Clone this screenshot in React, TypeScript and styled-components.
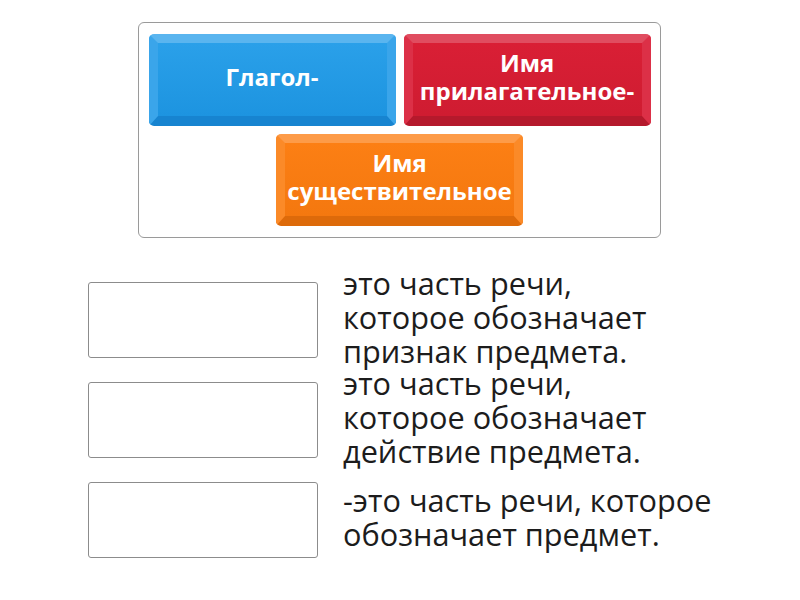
import React from "react";
import styled, { createGlobalStyle } from "styled-components";

const Global = createGlobalStyle`
  html, body { margin: 0; padding: 0; background: #ffffff; }
  body { font-family: "Open Sans", "Noto Sans", sans-serif; }
`;

const Page = styled.div`
  width: 800px;
  height: 600px;
  display: flex;
  flex-direction: column;
  align-items: flex-start;
`;

const Bank = styled.div`
  margin: 22px 0 0 138px;
  width: 521px;
  height: 203px;
  border: 1px solid #9a9a9a;
  border-radius: 6px;
  box-sizing: content-box;
  padding: 11px 0 0 0;
  display: flex;
  flex-wrap: wrap;
  justify-content: center;
  align-content: flex-start;
  column-gap: 8px;
  row-gap: 8px;
`;

type Tone = { top: string; side: string; bottom: string; face: string; faceEnd: string };

const tones: Record<string, Tone> = {
  blue: { top: "#5ab5ef", side: "#3aa5ea", bottom: "#1784d0", face: "#2aa0e9", faceEnd: "#1d94e0" },
  red: { top: "#e04d60", side: "#dc3047", bottom: "#b5192c", face: "#d91f35", faceEnd: "#cf1c31" },
  orange: { top: "#fd9b48", side: "#fb8a28", bottom: "#dd6a0a", face: "#fc7f14", faceEnd: "#f4780f" },
};

const Tile = styled.div<{ $tone: Tone }>`
  box-sizing: border-box;
  width: 247px;
  height: 92px;
  padding-bottom: 5px;
  border-style: solid;
  border-width: 9px 9px 10px 9px;
  border-color: ${(p) => `${p.$tone.top} ${p.$tone.side} ${p.$tone.bottom} ${p.$tone.side}`};
  border-radius: 5px;
  background: linear-gradient(${(p) => p.$tone.face}, ${(p) => p.$tone.faceEnd});
  display: flex;
  flex-direction: column;
  align-items: center;
  justify-content: center;
  text-align: center;
  color: #ffffff;
  font-weight: 700;
  font-size: 24px;
  line-height: 28px;
  white-space: nowrap;
`;

const TileLine = styled.span`
  display: block;
`;

const Rows = styled.div`
  margin: 44px 0 0 88px;
  display: flex;
  flex-direction: column;
  gap: 25px;
`;

const Row = styled.div`
  display: flex;
  align-items: center;
  height: 75px;
  gap: 25px;
`;

const Slot = styled.div`
  box-sizing: border-box;
  width: 230px;
  height: 76px;
  border: 1px solid #8c8c8c;
  border-radius: 3px;
  background: #fff;
`;

const Clue = styled.div`
  font-size: 30.7px;
  line-height: 34.3px;
  color: #1c1c1c;
  white-space: pre-line;
  margin-top: -5px;
`;

const items = [
  "это часть речи,\nкоторое обозначает\nпризнак предмета.",
  "это часть речи,\nкоторое обозначает\nдействие предмета.",
  "-это часть речи, которое\nобозначает предмет.",
];

const tiles: { tone: Tone; lines: string[] }[] = [
  { tone: tones.blue, lines: ["Глагол-"] },
  { tone: tones.red, lines: ["Имя", "прилагательное-"] },
  { tone: tones.orange, lines: ["Имя", "существительное"] },
];

export default function App() {
  return (
    <Page>
      <Global />
      <Bank>
        {tiles.map((t, i) => (
          <Tile key={i} $tone={t.tone}>
            {t.lines.map((l, j) => (
              <TileLine key={j}>{l}</TileLine>
            ))}
          </Tile>
        ))}
      </Bank>
      <Rows>
        {items.map((t, i) => (
          <Row key={i}>
            <Slot />
            <Clue>{t}</Clue>
          </Row>
        ))}
      </Rows>
    </Page>
  );
}
